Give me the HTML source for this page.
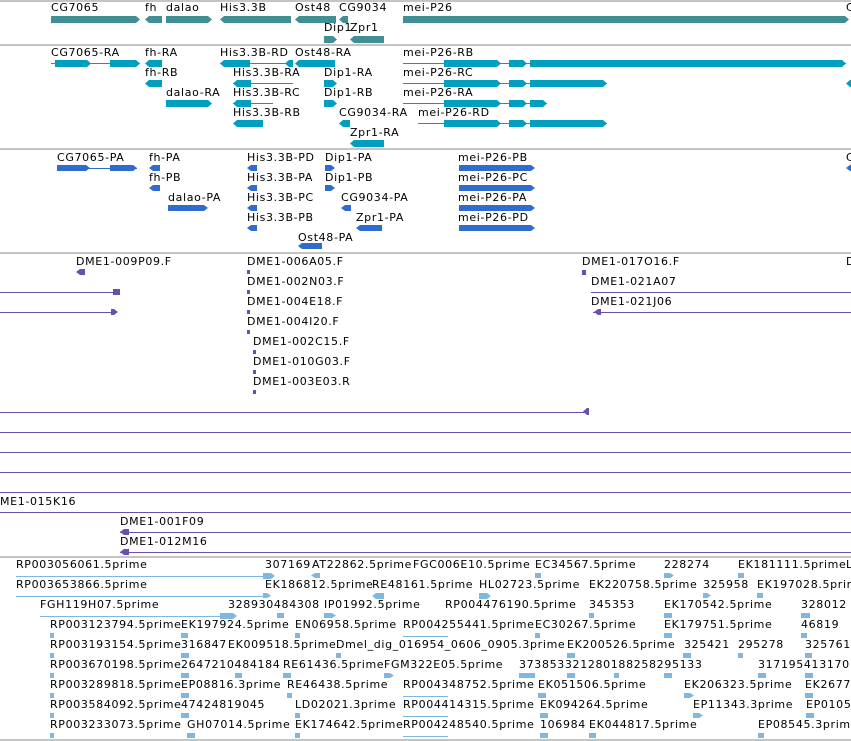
<!DOCTYPE html>
<html><head><meta charset="utf-8"><style>
body{margin:0;width:851px;height:741px;overflow:hidden;background:#fff;position:relative;font-family:"DejaVu Sans","Liberation Sans",sans-serif}
.t{position:absolute;font-size:11px;line-height:12px;white-space:nowrap;color:#000;letter-spacing:0.65px}
.b{position:absolute}
.s{position:absolute;left:0;width:851px;height:2px;background:#c4c4c4}
.g{background:#418f93}.x{background:#009fc0}.c{background:#306ccd}.p{background:#6a50ad}.e{background:#80b7e0}
.r{clip-path:polygon(0 0,calc(100% - 4px) 0,100% 50%,calc(100% - 4px) 100%,0 100%)}
.l{clip-path:polygon(4px 0,100% 0,100% 100%,4px 100%,0 50%)}
</style></head><body>
<div class="s" style="top:0"></div><div class="s" style="top:44px"></div><div class="s" style="top:148px"></div><div class="s" style="top:252px"></div><div class="s" style="top:556px"></div><div class="s" style="top:739px"></div>

<!-- genes -->
<div class="t" style="left:51px;top:2px">CG7065</div><div class="t" style="left:145px;top:2px">fh</div><div class="t" style="left:166px;top:2px">dalao</div><div class="t" style="left:220px;top:2px">His3.3B</div><div class="t" style="left:295px;top:2px">Ost48</div><div class="t" style="left:339px;top:2px">CG9034</div><div class="t" style="left:403px;top:2px">mei-P26</div><div class="t" style="left:846px;top:2px">C</div>
<div class="b g r" style="left:51px;top:16px;width:89px;height:7px"></div><div class="b g l" style="left:145px;top:16px;width:17px;height:7px"></div><div class="b g r" style="left:166px;top:16px;width:46px;height:7px"></div><div class="b g l" style="left:220px;top:16px;width:71px;height:7px"></div><div class="b g l" style="left:295px;top:16px;width:41px;height:7px"></div><div class="b g l" style="left:339px;top:16px;width:9px;height:7px"></div><div class="b g r" style="left:403px;top:16px;width:446px;height:7px"></div>
<div class="t" style="left:324px;top:22px">Dip1</div><div class="t" style="left:350px;top:22px">Zpr1</div>
<div class="b g r" style="left:324px;top:36px;width:13px;height:7px"></div><div class="b g l" style="left:350px;top:36px;width:34px;height:7px"></div>

<!-- transcripts -->
<div class="t" style="left:51px;top:47px">CG7065-RA</div><div class="t" style="left:145px;top:47px">fh-RA</div><div class="t" style="left:220px;top:47px">His3.3B-RD</div><div class="t" style="left:295px;top:47px">Ost48-RA</div><div class="t" style="left:403px;top:47px">mei-P26-RB</div>
<div class="t" style="left:145px;top:67px">fh-RB</div><div class="t" style="left:233px;top:67px">His3.3B-RA</div><div class="t" style="left:324px;top:67px">Dip1-RA</div><div class="t" style="left:403px;top:67px">mei-P26-RC</div>
<div class="t" style="left:166px;top:87px">dalao-RA</div><div class="t" style="left:233px;top:87px">His3.3B-RC</div><div class="t" style="left:324px;top:87px">Dip1-RB</div><div class="t" style="left:403px;top:87px">mei-P26-RA</div>
<div class="t" style="left:233px;top:107px">His3.3B-RB</div><div class="t" style="left:339px;top:107px">CG9034-RA</div><div class="t" style="left:418px;top:107px">mei-P26-RD</div>
<div class="t" style="left:350px;top:127px">Zpr1-RA</div>
<div class="b x" style="left:51px;top:63px;width:89px;height:1px"></div><div class="b x r" style="left:55px;top:60px;width:36px;height:7px"></div><div class="b x r" style="left:110px;top:60px;width:30px;height:7px"></div>
<div class="b x l" style="left:145px;top:60px;width:17px;height:7px"></div><div class="b x l" style="left:145px;top:80px;width:17px;height:7px"></div>
<div class="b x" style="left:220px;top:63px;width:73px;height:1px"></div><div class="b x l" style="left:220px;top:60px;width:30px;height:7px"></div><div class="b x l" style="left:285px;top:60px;width:8px;height:7px"></div>
<div class="b x l" style="left:295px;top:60px;width:40px;height:7px"></div>
<div class="b x" style="left:403px;top:63px;width:443px;height:1px"></div><div class="b x r" style="left:444px;top:60px;width:57px;height:7px"></div><div class="b x r" style="left:509px;top:60px;width:18px;height:7px"></div><div class="b x r" style="left:530px;top:60px;width:316px;height:7px"></div>
<div class="b x" style="left:233px;top:83px;width:60px;height:1px"></div><div class="b x l" style="left:233px;top:80px;width:18px;height:7px"></div><div class="b x r" style="left:324px;top:80px;width:13px;height:7px"></div>
<div class="b x" style="left:403px;top:83px;width:204px;height:1px"></div><div class="b x r" style="left:444px;top:80px;width:57px;height:7px"></div><div class="b x r" style="left:509px;top:80px;width:18px;height:7px"></div><div class="b x r" style="left:530px;top:80px;width:77px;height:7px"></div><div class="b x l" style="left:846px;top:80px;width:5px;height:7px"></div>
<div class="b x r" style="left:166px;top:100px;width:46px;height:7px"></div>
<div class="b x" style="left:233px;top:103px;width:40px;height:1px"></div><div class="b x l" style="left:233px;top:100px;width:18px;height:7px"></div><div class="b x r" style="left:324px;top:100px;width:13px;height:7px"></div>
<div class="b x" style="left:403px;top:103px;width:144px;height:1px"></div><div class="b x r" style="left:444px;top:100px;width:57px;height:7px"></div><div class="b x r" style="left:509px;top:100px;width:18px;height:7px"></div><div class="b x r" style="left:530px;top:100px;width:17px;height:7px"></div>
<div class="b x l" style="left:233px;top:120px;width:30px;height:7px"></div><div class="b x l" style="left:339px;top:120px;width:11px;height:7px"></div>
<div class="b x" style="left:418px;top:123px;width:189px;height:1px"></div><div class="b x r" style="left:444px;top:120px;width:57px;height:7px"></div><div class="b x r" style="left:509px;top:120px;width:18px;height:7px"></div><div class="b x r" style="left:530px;top:120px;width:77px;height:7px"></div>
<div class="b x l" style="left:350px;top:140px;width:34px;height:7px"></div>

<!-- CDS -->
<div class="t" style="left:57px;top:152px">CG7065-PA</div><div class="t" style="left:149px;top:152px">fh-PA</div><div class="t" style="left:247px;top:152px">His3.3B-PD</div><div class="t" style="left:325px;top:152px">Dip1-PA</div><div class="t" style="left:458px;top:152px">mei-P26-PB</div><div class="t" style="left:846px;top:152px">C</div>
<div class="t" style="left:149px;top:172px">fh-PB</div><div class="t" style="left:247px;top:172px">His3.3B-PA</div><div class="t" style="left:325px;top:172px">Dip1-PB</div><div class="t" style="left:458px;top:172px">mei-P26-PC</div>
<div class="t" style="left:168px;top:192px">dalao-PA</div><div class="t" style="left:247px;top:192px">His3.3B-PC</div><div class="t" style="left:341px;top:192px">CG9034-PA</div><div class="t" style="left:458px;top:192px">mei-P26-PA</div>
<div class="t" style="left:247px;top:212px">His3.3B-PB</div><div class="t" style="left:356px;top:212px">Zpr1-PA</div><div class="t" style="left:458px;top:212px">mei-P26-PD</div>
<div class="t" style="left:298px;top:232px">Ost48-PA</div>
<div class="b c" style="left:57px;top:168px;width:80px;height:1px"></div><div class="b c r" style="left:57px;top:165px;width:33px;height:6px"></div><div class="b c r" style="left:110px;top:165px;width:27px;height:6px"></div>
<div class="b c l" style="left:149px;top:165px;width:11px;height:6px"></div><div class="b c l" style="left:149px;top:185px;width:11px;height:6px"></div><div class="b c r" style="left:168px;top:205px;width:40px;height:6px"></div>
<div class="b c l" style="left:247px;top:165px;width:10px;height:6px"></div><div class="b c l" style="left:247px;top:185px;width:10px;height:6px"></div><div class="b c l" style="left:247px;top:205px;width:10px;height:6px"></div><div class="b c l" style="left:247px;top:225px;width:10px;height:6px"></div>
<div class="b c r" style="left:325px;top:165px;width:10px;height:6px"></div><div class="b c r" style="left:325px;top:185px;width:10px;height:6px"></div><div class="b c l" style="left:341px;top:205px;width:10px;height:6px"></div><div class="b c l" style="left:356px;top:225px;width:26px;height:6px"></div><div class="b c l" style="left:298px;top:243px;width:24px;height:6px"></div>
<div class="b c r" style="left:459px;top:165px;width:76px;height:6px"></div><div class="b c r" style="left:459px;top:185px;width:76px;height:6px"></div><div class="b c r" style="left:459px;top:205px;width:76px;height:6px"></div><div class="b c r" style="left:459px;top:225px;width:76px;height:6px"></div><div class="b c l" style="left:846px;top:165px;width:5px;height:6px"></div>

<!-- clones -->
<div class="t" style="left:76px;top:256px">DME1-009P09.F</div><div class="t" style="left:247px;top:256px">DME1-006A05.F</div><div class="t" style="left:582px;top:256px">DME1-017O16.F</div><div class="t" style="left:846px;top:256px">D</div>
<div class="t" style="left:247px;top:276px">DME1-002N03.F</div><div class="t" style="left:591px;top:276px">DME1-021A07</div>
<div class="t" style="left:247px;top:296px">DME1-004E18.F</div><div class="t" style="left:591px;top:296px">DME1-021J06</div>
<div class="t" style="left:247px;top:316px">DME1-004I20.F</div><div class="t" style="left:253px;top:336px">DME1-002C15.F</div><div class="t" style="left:253px;top:356px">DME1-010G03.F</div><div class="t" style="left:253px;top:376px">DME1-003E03.R</div>
<div class="b p l" style="left:76px;top:269px;width:9px;height:6px"></div><div class="b p" style="left:247px;top:270px;width:3px;height:4px"></div><div class="b p" style="left:582px;top:270px;width:4px;height:5px"></div>
<div class="b p" style="left:247px;top:290px;width:3px;height:4px"></div><div class="b p" style="left:247px;top:310px;width:3px;height:4px"></div><div class="b p" style="left:247px;top:330px;width:3px;height:4px"></div><div class="b p" style="left:253px;top:350px;width:3px;height:4px"></div><div class="b p" style="left:253px;top:370px;width:3px;height:4px"></div><div class="b p" style="left:253px;top:390px;width:3px;height:4px"></div>
<div class="b p" style="left:0;top:292px;width:118px;height:1px"></div><div class="b p" style="left:113px;top:289px;width:7px;height:6px"></div>
<div class="b p" style="left:0;top:312px;width:116px;height:1px"></div><div class="b p r" style="left:111px;top:309px;width:7px;height:6px"></div>
<div class="b p" style="left:591px;top:292px;width:260px;height:1px"></div><div class="b p" style="left:593px;top:312px;width:258px;height:1px"></div><div class="b p l" style="left:594px;top:309px;width:7px;height:6px"></div>
<div class="b p" style="left:0;top:412px;width:588px;height:1px"></div><div class="b p l" style="left:583px;top:408px;width:6px;height:7px"></div>
<div class="b p" style="left:0;top:432px;width:851px;height:1px"></div><div class="b p" style="left:0;top:452px;width:851px;height:1px"></div><div class="b p" style="left:0;top:472px;width:851px;height:1px"></div><div class="b p" style="left:0;top:492px;width:851px;height:1px"></div>
<div class="t" style="left:0;top:496px">ME1-015K16</div><div class="b p" style="left:0;top:512px;width:851px;height:1px"></div>
<div class="t" style="left:120px;top:516px">DME1-001F09</div><div class="b p" style="left:120px;top:532px;width:731px;height:1px"></div><div class="b p l" style="left:120px;top:529px;width:9px;height:6px"></div>
<div class="t" style="left:120px;top:536px">DME1-012M16</div><div class="b p" style="left:120px;top:552px;width:731px;height:1px"></div><div class="b p l" style="left:120px;top:549px;width:9px;height:6px"></div>

<!-- ESTs -->
<div class="t" style="left:16px;top:559px">RP003056061.5prime</div><div class="t" style="left:265px;top:559px">307169</div><div class="t" style="left:312px;top:559px">AT22862.5prime</div><div class="t" style="left:413px;top:559px">FGC006E10.5prime</div><div class="t" style="left:535px;top:559px">EC34567.5prime</div><div class="t" style="left:664px;top:559px">228274</div><div class="t" style="left:738px;top:559px">EK181111.5prime</div><div class="t" style="left:846px;top:559px">L</div>
<div class="t" style="left:16px;top:579px">RP003653866.5prime</div><div class="t" style="left:265px;top:579px">EK186812.5prime</div><div class="t" style="left:372px;top:579px">RE48161.5prime</div><div class="t" style="left:479px;top:579px">HL02723.5prime</div><div class="t" style="left:589px;top:579px">EK220758.5prime</div><div class="t" style="left:703px;top:579px">325958</div><div class="t" style="left:757px;top:579px">EK197028.5prime</div>
<div class="t" style="left:40px;top:599px">FGH119H07.5prime</div><div class="t" style="left:228px;top:599px">328930484308</div><div class="t" style="left:324px;top:599px">IP01992.5prime</div><div class="t" style="left:445px;top:599px">RP004476190.5prime</div><div class="t" style="left:589px;top:599px">345353</div><div class="t" style="left:664px;top:599px">EK170542.5prime</div><div class="t" style="left:801px;top:599px">328012</div>
<div class="t" style="left:50px;top:619px">RP003123794.5prime</div><div class="t" style="left:181px;top:619px">EK197924.5prime</div><div class="t" style="left:295px;top:619px">EN06958.5prime</div><div class="t" style="left:403px;top:619px">RP004255441.5prime</div><div class="t" style="left:535px;top:619px">EC30267.5prime</div><div class="t" style="left:664px;top:619px">EK179751.5prime</div><div class="t" style="left:801px;top:619px">46819</div>
<div class="t" style="left:50px;top:639px">RP003193154.5prime</div><div class="t" style="left:181px;top:639px">316847</div><div class="t" style="left:228px;top:639px">EK009518.5prime</div><div class="t" style="left:336px;top:639px">Dmel_dig_016954_0606_0905.3prime</div><div class="t" style="left:567px;top:639px">EK200526.5prime</div><div class="t" style="left:684px;top:639px">325421</div><div class="t" style="left:738px;top:639px">295278</div><div class="t" style="left:805px;top:639px">325761</div>
<div class="t" style="left:50px;top:659px">RP003670198.5prime</div><div class="t" style="left:181px;top:659px">2647210484184</div><div class="t" style="left:283px;top:659px">RE61436.5prime</div><div class="t" style="left:384px;top:659px">FGM322E05.5prime</div><div class="t" style="left:519px;top:659px">373853321280188258295133</div><div class="t" style="left:758px;top:659px">317195413170</div>
<div class="t" style="left:50px;top:679px">RP003289818.5prime</div><div class="t" style="left:181px;top:679px">EP08816.3prime</div><div class="t" style="left:287px;top:679px">RE46438.5prime</div><div class="t" style="left:403px;top:679px">RP004348752.5prime</div><div class="t" style="left:538px;top:679px">EK051506.5prime</div><div class="t" style="left:684px;top:679px">EK206323.5prime</div><div class="t" style="left:805px;top:679px">EK2677</div>
<div class="t" style="left:50px;top:699px">RP003584092.5prime</div><div class="t" style="left:181px;top:699px">47424819045</div><div class="t" style="left:295px;top:699px">LD02021.3prime</div><div class="t" style="left:403px;top:699px">RP004414315.5prime</div><div class="t" style="left:540px;top:699px">EK094264.5prime</div><div class="t" style="left:693px;top:699px">EP11343.3prime</div><div class="t" style="left:806px;top:699px">EP0105</div>
<div class="t" style="left:50px;top:719px">RP003233073.5prime</div><div class="t" style="left:187px;top:719px">GH07014.5prime</div><div class="t" style="left:295px;top:719px">EK174642.5prime</div><div class="t" style="left:403px;top:719px">RP004248540.5prime</div><div class="t" style="left:540px;top:719px">106984</div><div class="t" style="left:589px;top:719px">EK044817.5prime</div><div class="t" style="left:758px;top:719px">EP08545.3prime</div>
<div class="b e" style="left:16px;top:576px;width:254px;height:1px"></div><div class="b e r" style="left:263px;top:573px;width:12px;height:6px"></div><div class="b e l" style="left:311px;top:573px;width:9px;height:5px"></div><div class="b e" style="left:535px;top:573px;width:6px;height:5px"></div><div class="b e r" style="left:664px;top:573px;width:10px;height:5px"></div><div class="b e" style="left:738px;top:573px;width:6px;height:5px"></div>
<div class="b e" style="left:16px;top:596px;width:254px;height:1px"></div><div class="b e r" style="left:263px;top:593px;width:8px;height:5px"></div><div class="b e l" style="left:372px;top:593px;width:12px;height:6px"></div><div class="b e r" style="left:479px;top:593px;width:12px;height:6px"></div><div class="b e r" style="left:703px;top:593px;width:8px;height:5px"></div><div class="b e" style="left:757px;top:593px;width:6px;height:5px"></div>
<div class="b e" style="left:40px;top:616px;width:195px;height:1px"></div><div class="b e r" style="left:220px;top:613px;width:17px;height:6px"></div><div class="b e" style="left:277px;top:613px;width:7px;height:5px"></div><div class="b e r" style="left:324px;top:613px;width:12px;height:5px"></div><div class="b e" style="left:589px;top:613px;width:5px;height:5px"></div><div class="b e" style="left:664px;top:613px;width:8px;height:5px"></div><div class="b e" style="left:801px;top:613px;width:9px;height:5px"></div>
<div class="b e" style="left:50px;top:633px;width:4px;height:5px"></div><div class="b e" style="left:181px;top:633px;width:7px;height:5px"></div><div class="b e" style="left:295px;top:633px;width:5px;height:5px"></div><div class="b e" style="left:403px;top:636px;width:45px;height:1px"></div><div class="b e" style="left:535px;top:633px;width:5px;height:5px"></div><div class="b e" style="left:664px;top:633px;width:8px;height:5px"></div><div class="b e" style="left:801px;top:633px;width:6px;height:5px"></div>
<div class="b e" style="left:50px;top:653px;width:4px;height:5px"></div><div class="b e" style="left:181px;top:653px;width:8px;height:5px"></div><div class="b e" style="left:336px;top:653px;width:5px;height:5px"></div><div class="b e" style="left:567px;top:653px;width:8px;height:5px"></div><div class="b e" style="left:683px;top:653px;width:8px;height:5px"></div><div class="b e" style="left:738px;top:653px;width:5px;height:5px"></div><div class="b e" style="left:805px;top:653px;width:7px;height:5px"></div>
<div class="b e" style="left:50px;top:673px;width:4px;height:5px"></div><div class="b e" style="left:181px;top:673px;width:8px;height:5px"></div><div class="b e" style="left:235px;top:673px;width:7px;height:5px"></div><div class="b e" style="left:283px;top:673px;width:8px;height:5px"></div><div class="b e r" style="left:384px;top:673px;width:10px;height:5px"></div><div class="b e" style="left:519px;top:673px;width:16px;height:5px"></div><div class="b e" style="left:567px;top:673px;width:8px;height:5px"></div><div class="b e" style="left:614px;top:673px;width:5px;height:5px"></div><div class="b e" style="left:664px;top:673px;width:8px;height:5px"></div><div class="b e" style="left:758px;top:673px;width:8px;height:5px"></div><div class="b e" style="left:805px;top:673px;width:8px;height:5px"></div>
<div class="b e" style="left:50px;top:693px;width:4px;height:5px"></div><div class="b e" style="left:181px;top:693px;width:8px;height:5px"></div><div class="b e" style="left:287px;top:693px;width:5px;height:5px"></div><div class="b e" style="left:403px;top:696px;width:45px;height:1px"></div><div class="b e" style="left:538px;top:693px;width:8px;height:5px"></div><div class="b e r" style="left:684px;top:693px;width:10px;height:5px"></div><div class="b e" style="left:805px;top:693px;width:8px;height:5px"></div>
<div class="b e" style="left:50px;top:713px;width:4px;height:5px"></div><div class="b e" style="left:181px;top:713px;width:8px;height:5px"></div><div class="b e" style="left:295px;top:713px;width:5px;height:5px"></div><div class="b e" style="left:403px;top:716px;width:45px;height:1px"></div><div class="b e" style="left:540px;top:713px;width:8px;height:5px"></div><div class="b e r" style="left:693px;top:713px;width:10px;height:5px"></div><div class="b e" style="left:806px;top:713px;width:8px;height:5px"></div>
<div class="b e" style="left:50px;top:733px;width:4px;height:5px"></div><div class="b e" style="left:187px;top:733px;width:8px;height:5px"></div><div class="b e" style="left:295px;top:733px;width:5px;height:5px"></div><div class="b e" style="left:403px;top:736px;width:45px;height:1px"></div><div class="b e" style="left:540px;top:733px;width:8px;height:5px"></div><div class="b e" style="left:589px;top:733px;width:7px;height:5px"></div><div class="b e" style="left:758px;top:733px;width:6px;height:5px"></div>
</body></html>
